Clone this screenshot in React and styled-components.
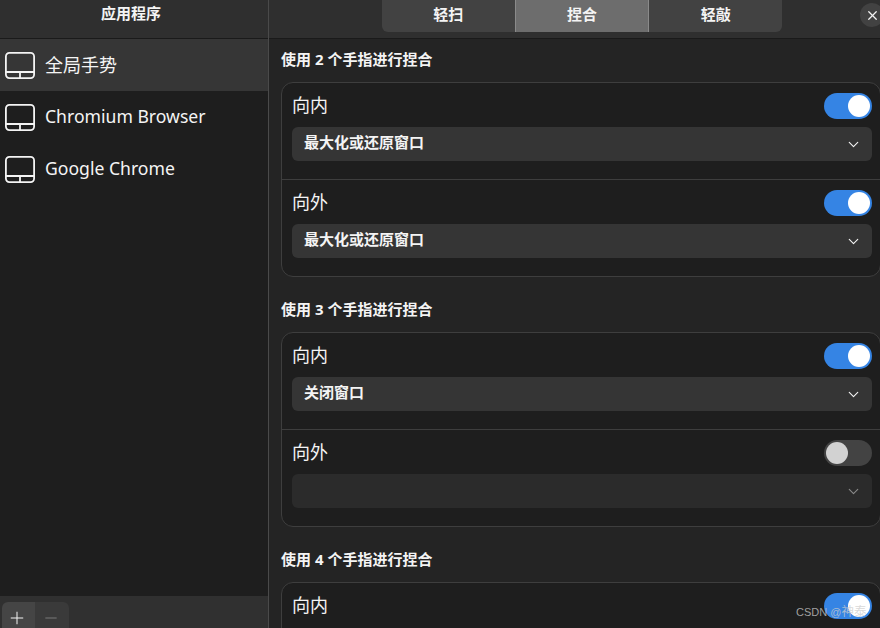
import React from 'react';
import styled, { createGlobalStyle } from 'styled-components';
import { ChevronDown, X, Plus, Minus } from 'lucide-react';

const FONT = '"Noto Sans", "Noto Sans CJK SC", sans-serif';

const GlobalStyle = createGlobalStyle`
  html, body { margin: 0; height: 100%; background: #242424; overflow: hidden; }
  #root { height: 100%; }
  * { box-sizing: border-box; }
`;

const Window = styled.div`
  display: flex;
  width: 880px;
  height: 628px;
  overflow: hidden;
  position: relative;
  font-family: ${FONT};
  color: #f4f4f4;
`;

const Sidebar = styled.aside`
  flex: 0 0 269px;
  display: flex;
  flex-direction: column;
  background: #1e1e1e;
  border-right: 1px solid #4a4a4a;
`;

const SideHeader = styled.div`
  height: 39px;
  flex: none;
  padding: 3px 6px 0 0;
  text-align: center;
  font-size: 15px;
  line-height: 20px;
  font-weight: 700;
  background: #2f2f2f;
  border-bottom: 1px solid #1a1a1a;
`;

const AppList = styled.div`
  flex: 1;
`;

const AppRow = styled.div`
  display: flex;
  align-items: center;
  gap: 10px;
  height: 52px;
  padding-left: 5px;
  background: ${p => (p.$active ? '#363636' : 'transparent')};
`;

const AppName = styled.span`
  padding-bottom: ${p => (p.$cjk ? '3px' : '2px')};
  font-size: ${p => (p.$cjk ? '18px' : '17.6px')};
`;

const SideFooter = styled.div`
  flex: none;
  height: 32px;
  padding: 6px 0 0 1.5px;
  display: flex;
  overflow: hidden;
  background: #303030;
`;

const FooterButton = styled.div`
  flex: none;
  width: 33.5px;
  height: 32px;
  padding-right: 2px;
  display: flex;
  align-items: center;
  justify-content: center;
  background: ${p => (p.$primary ? '#454545' : '#3a3a3a')};
  color: ${p => (p.$primary ? '#f4f4f4' : '#7c7c7c')};
  border-radius: ${p => (p.$primary ? '6px 0 0 0' : '0 6px 0 0')};
`;

const Main = styled.main`
  flex: 1;
  min-width: 0;
  display: flex;
  flex-direction: column;
  background: #242424;
`;

const TopBar = styled.header`
  flex: none;
  height: 39px;
  display: flex;
  padding-left: 113px;
  background: #2f2f2f;
  border-bottom: 1px solid #1a1a1a;
`;

const Tabs = styled.div`
  flex: none;
  display: flex;
  width: 400px;
  height: 32px;
  border-radius: 0 0 6px 6px;
  overflow: hidden;
  background: #424242;
`;

const Tab = styled.div`
  flex: 1;
  display: flex;
  align-items: center;
  justify-content: center;
  padding-bottom: 6px;
  font-size: 15px;
  font-weight: 700;
  background: ${p => (p.$active ? '#6d6d6d' : 'transparent')};
  border-left: ${p => (p.$active ? '1px solid #8a8a8a' : 'none')};
  border-right: ${p => (p.$active ? '1px solid #8a8a8a' : 'none')};
`;

const CloseButton = styled.div`
  flex: none;
  width: 24px;
  height: 24px;
  margin: 3px 0 0 78px;
  border-radius: 50%;
  display: flex;
  align-items: center;
  justify-content: center;
  background: #424242;
`;

const Content = styled.div`
  flex: 1;
  overflow: hidden;
  padding: 11px 0 0 12px;
`;

const SectionTitle = styled.h2`
  margin: 0;
  height: 20px;
  font-size: 15px;
  line-height: 18px;
  font-weight: 700;
  white-space: pre;
`;

const Card = styled.section`
  width: 600px;
  height: 195px;
  margin: 12px 0 23px;
  background: #1e1e1e;
  border: 1px solid #3e3e3e;
  border-radius: 12px;
`;

const Setting = styled.div`
  padding: 10px 8px 0 10px;
  height: ${p => (p.$first ? '97px' : 'auto')};
  border-bottom: ${p => (p.$first ? '1px solid #3e3e3e' : 'none')};
`;

const SettingHead = styled.div`
  display: flex;
  align-items: center;
  justify-content: space-between;
  height: 26px;
  font-size: 18px;
`;

const SettingLabel = styled.span`
  padding-bottom: 4px;
`;

const Toggle = styled.div`
  width: 48px;
  height: 26px;
  padding: 2px;
  border-radius: 13px;
  display: flex;
  justify-content: ${p => (p.$on ? 'flex-end' : 'flex-start')};
  background: ${p => (p.$on ? '#3584e4' : '#434343')};

  &::after {
    content: '';
    width: 22px;
    height: 22px;
    border-radius: 50%;
    background: ${p => (p.$on ? '#ffffff' : '#d2d2d2')};
  }
`;

const Select = styled.div`
  display: flex;
  align-items: center;
  justify-content: space-between;
  height: 34px;
  margin-top: 8px;
  padding: 0 10px 0 12px;
  border-radius: 6px;
  font-size: 15px;
  font-weight: 700;
  background: ${p => (p.$disabled ? '#2b2b2b' : '#353535')};
  color: ${p => (p.$disabled ? '#8a8a8a' : '#f4f4f4')};
`;

const SelectValue = styled.span`
  padding-bottom: 5px;
`;

const Watermark = styled.div`
  position: absolute;
  left: 796px;
  top: 605px;
  font-family: "Liberation Sans", "Noto Sans CJK SC", sans-serif;
  font-size: 11px;
  line-height: 14px;
  color: rgba(205, 205, 205, 0.75);
`;

const WatermarkName = styled.span`
  font-size: 12.5px;
`;

function TouchpadIcon() {
  return (
    <svg width="30" height="27" viewBox="0 0 30 27" fill="none" stroke="#f4f4f4" strokeWidth="1.8">
      <rect x="0.9" y="0.9" width="28.2" height="25.2" rx="3.5" />
      <path d="M1 20H29M15 20V26" />
    </svg>
  );
}

function SettingBlock({ label, on, value, first }) {
  return (
    <Setting $first={first}>
      <SettingHead>
        <SettingLabel>{label}</SettingLabel>
        <Toggle $on={on} />
      </SettingHead>
      {value !== undefined && (
        <Select $disabled={!on}>
          <SelectValue>{value}</SelectValue>
          <ChevronDown size={17} strokeWidth={1.6} />
        </Select>
      )}
    </Setting>
  );
}

const apps = ['全局手势', 'Chromium Browser', 'Google Chrome'];

// the 4 finger card runs off the bottom of the window, only its first row shows
const sections = [
  { fingers: 2, inward: '最大化或还原窗口', outward: '最大化或还原窗口', outOn: true },
  { fingers: 3, inward: '关闭窗口', outward: '', outOn: false },
  { fingers: 4 },
];

export default function App() {
  return (
    <Window>
      <GlobalStyle />
      <Sidebar>
        <SideHeader>应用程序</SideHeader>
        <AppList>
          {apps.map((name, i) => (
            <AppRow key={name} $active={i === 0}>
              <TouchpadIcon />
              <AppName $cjk={i === 0}>{name}</AppName>
            </AppRow>
          ))}
        </AppList>
        <SideFooter>
          <FooterButton $primary><Plus size={20} strokeWidth={1.2} /></FooterButton>
          <FooterButton><Minus size={18} strokeWidth={1.3} /></FooterButton>
        </SideFooter>
      </Sidebar>
      <Main>
        <TopBar>
          <Tabs>
            <Tab>轻扫</Tab>
            <Tab $active>捏合</Tab>
            <Tab>轻敲</Tab>
          </Tabs>
          <CloseButton><X size={15} strokeWidth={2} /></CloseButton>
        </TopBar>
        <Content>
          {sections.map(s => (
            <div key={s.fingers}>
              <SectionTitle>使用 {s.fingers} 个手指进行捏合</SectionTitle>
              <Card>
                <SettingBlock first label="向内" on value={s.inward} />
                {s.inward && <SettingBlock label="向外" on={s.outOn} value={s.outward} />}
              </Card>
            </div>
          ))}
        </Content>
      </Main>
      <Watermark>CSDN @<WatermarkName>神泰</WatermarkName></Watermark>
    </Window>
  );
}
